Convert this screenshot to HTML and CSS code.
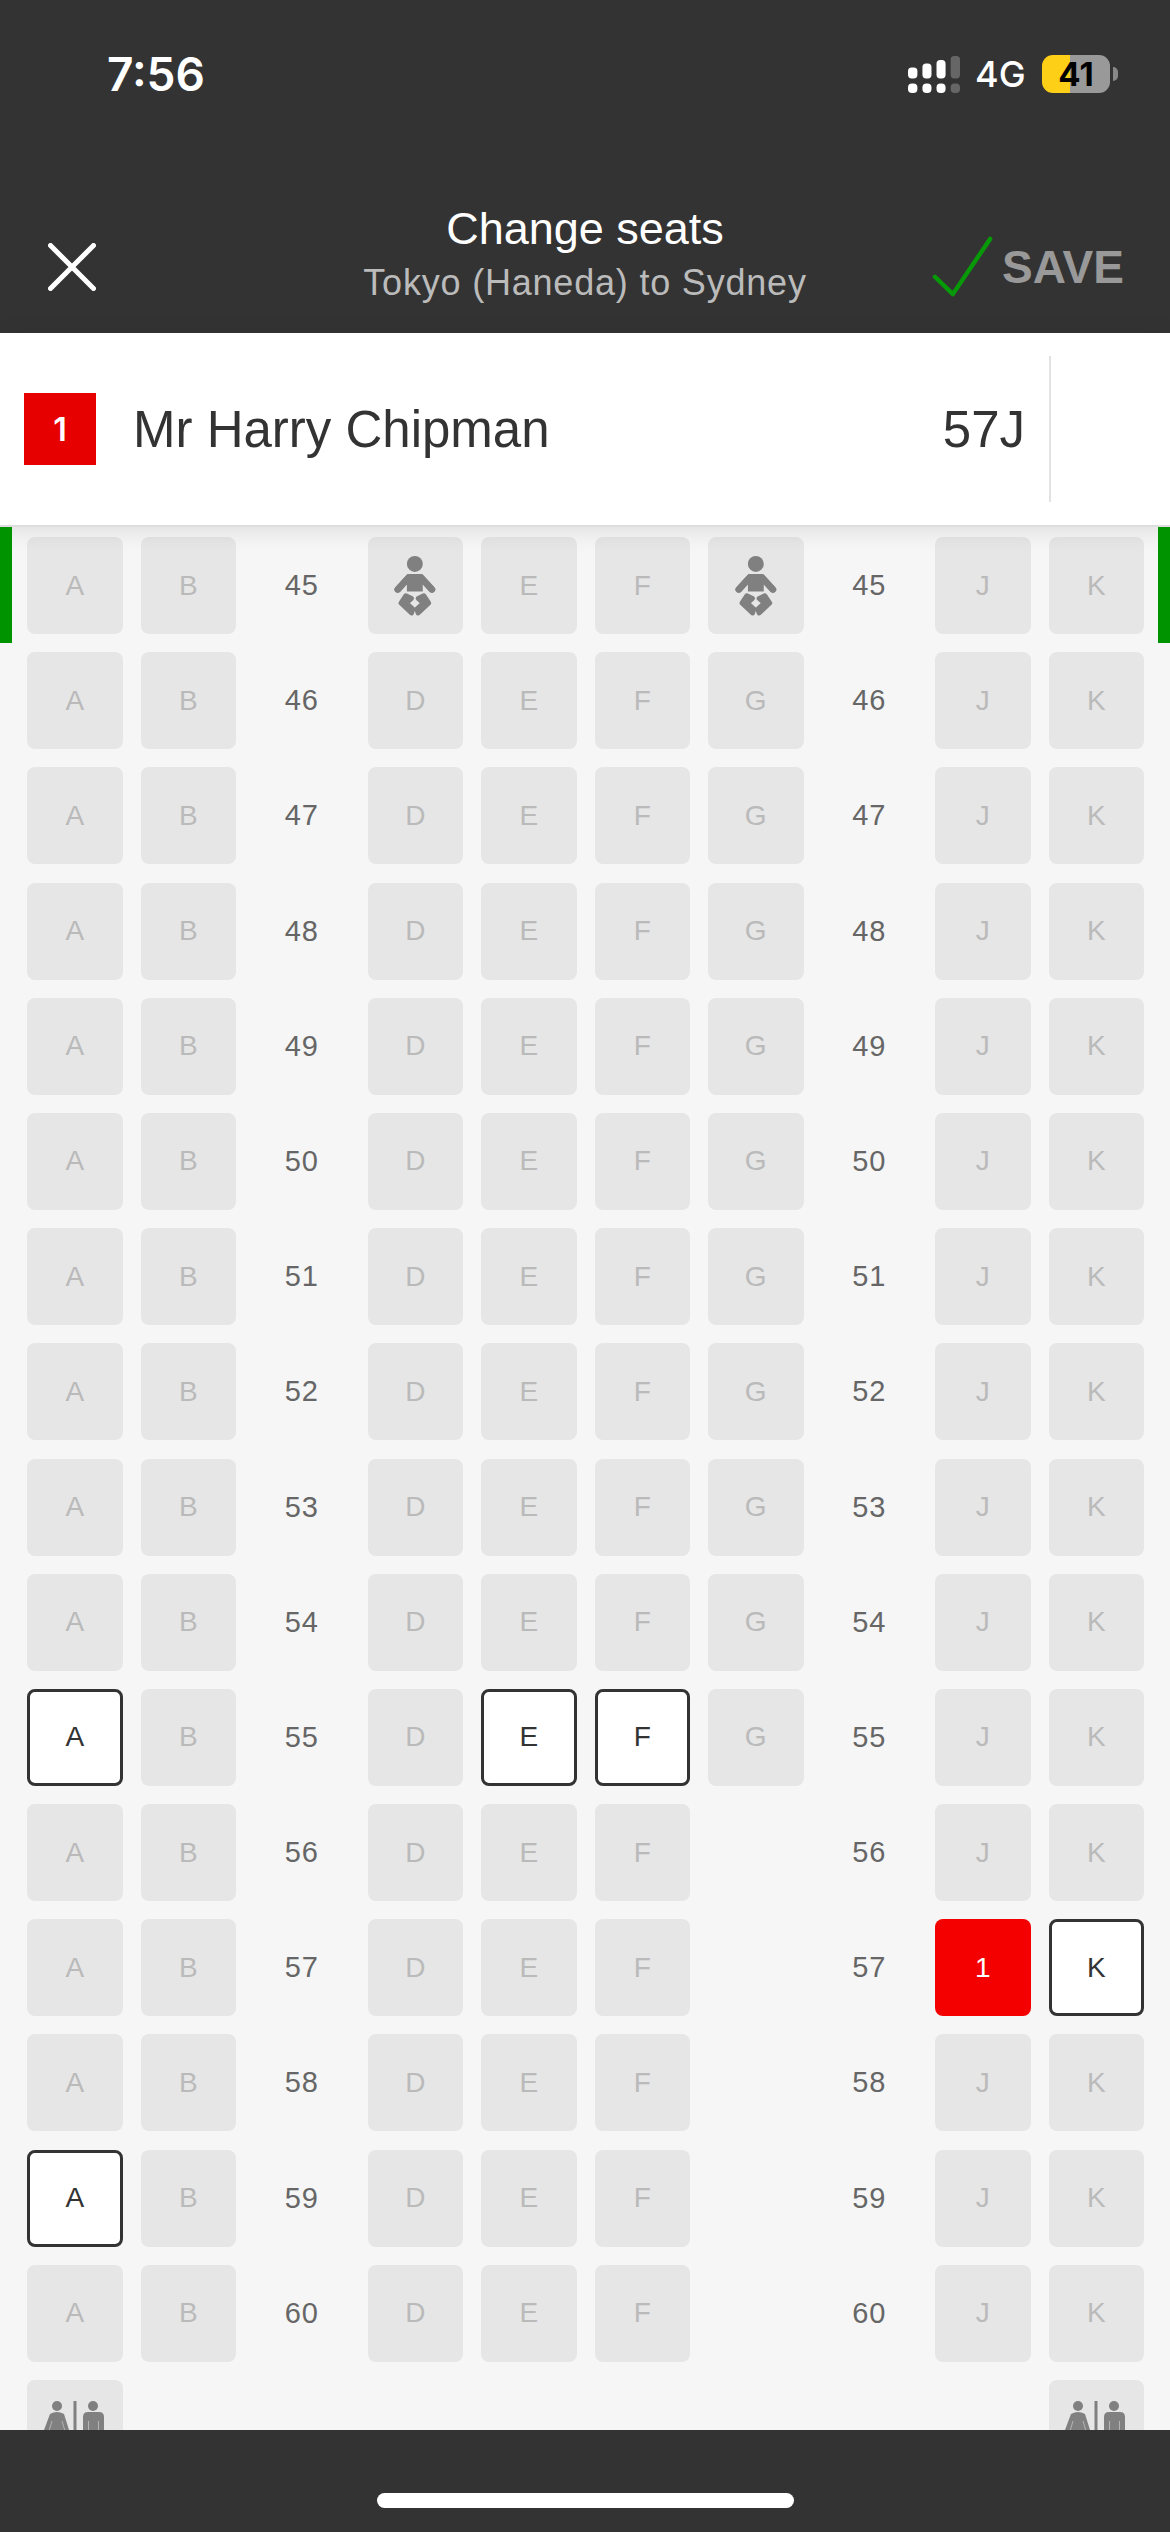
FILE: index.html
```html
<!DOCTYPE html>
<html lang="en">
<head>
<meta charset="utf-8">
<title>Change seats</title>
<link rel="stylesheet" href="styles.css">
</head>
<body>
<div class="app">
  <header class="top">
    <div class="status">
      <span class="time">7:56</span>
      <div class="status-right">
        <svg class="signal" viewBox="0 0 155 110" aria-hidden="true">
          <rect x="0" y="34" width="28" height="33" rx="11" fill="#fff"/>
          <rect x="43" y="22" width="27" height="45" rx="11" fill="#fff"/>
          <rect x="85" y="12" width="27" height="55" rx="11" fill="#fff"/>
          <rect x="127" y="0" width="28" height="67" rx="11" fill="#666"/>
          <rect x="0" y="82" width="28" height="28" rx="12" fill="#fff"/>
          <rect x="43" y="82" width="27" height="28" rx="12" fill="#fff"/>
          <rect x="85" y="82" width="27" height="28" rx="12" fill="#fff"/>
          <rect x="127" y="82" width="28" height="28" rx="12" fill="#666"/>
        </svg>
        <span class="net">4G</span>
        <div class="battery"><span class="battery-level">41</span></div>
        <span class="battery-nub"></span>
      </div>
    </div>
    <div class="nav">
      <svg class="close" viewBox="0 0 48 48" aria-hidden="true"><path d="M2.5 2.5 45.500 45.500M45.500 2.500 2.500 45.500"/></svg>
      <div class="titles">
        <div class="title">Change seats</div>
        <div class="subtitle">Tokyo (Haneda) to Sydney</div>
      </div>
      <div class="save">
        <svg class="tick" viewBox="0 0 64 64" aria-hidden="true"><path d="M3 42 21.500 60 60 3"/></svg>
        <span>SAVE</span>
      </div>
    </div>
  </header>

  <section class="passenger">
    <span class="badge">1</span>
    <span class="name">Mr Harry Chipman</span>
    <span class="seat-no">57J</span>
    <span class="divider"></span>
  </section>

  <main class="map">
    <span class="marker marker-left"></span>
    <span class="marker marker-right"></span>
    <div class="grid">
      <div class="seat">A</div><div class="seat">B</div><div class="row-no">45</div>
      <div class="seat"><svg class="baby" viewBox="0 0 145 190" aria-hidden="true"><circle cx="72" cy="30" r="24"/><path d="M50 60H94L130 100 118 116 96 92V113H48V92L26 116 14 100Z"/><path class="limb" d="M52 72 20 107M92 72 124 107"/><path class="leg" d="M45 126 30 148 62 178 66 166 46 148 62 134Z"/><path class="leg" d="M99 126 114 148 82 178 78 166 98 148 82 134Z"/></svg></div>
      <div class="seat">E</div><div class="seat">F</div>
      <div class="seat"><svg class="baby" viewBox="0 0 145 190" aria-hidden="true"><circle cx="72" cy="30" r="24"/><path d="M50 60H94L130 100 118 116 96 92V113H48V92L26 116 14 100Z"/><path class="limb" d="M52 72 20 107M92 72 124 107"/><path class="leg" d="M45 126 30 148 62 178 66 166 46 148 62 134Z"/><path class="leg" d="M99 126 114 148 82 178 78 166 98 148 82 134Z"/></svg></div>
      <div class="row-no">45</div><div class="seat">J</div><div class="seat">K</div>

      <div class="seat">A</div><div class="seat">B</div><div class="row-no">46</div><div class="seat">D</div><div class="seat">E</div><div class="seat">F</div><div class="seat">G</div><div class="row-no">46</div><div class="seat">J</div><div class="seat">K</div>
      <div class="seat">A</div><div class="seat">B</div><div class="row-no">47</div><div class="seat">D</div><div class="seat">E</div><div class="seat">F</div><div class="seat">G</div><div class="row-no">47</div><div class="seat">J</div><div class="seat">K</div>
      <div class="seat">A</div><div class="seat">B</div><div class="row-no">48</div><div class="seat">D</div><div class="seat">E</div><div class="seat">F</div><div class="seat">G</div><div class="row-no">48</div><div class="seat">J</div><div class="seat">K</div>
      <div class="seat">A</div><div class="seat">B</div><div class="row-no">49</div><div class="seat">D</div><div class="seat">E</div><div class="seat">F</div><div class="seat">G</div><div class="row-no">49</div><div class="seat">J</div><div class="seat">K</div>
      <div class="seat">A</div><div class="seat">B</div><div class="row-no">50</div><div class="seat">D</div><div class="seat">E</div><div class="seat">F</div><div class="seat">G</div><div class="row-no">50</div><div class="seat">J</div><div class="seat">K</div>
      <div class="seat">A</div><div class="seat">B</div><div class="row-no">51</div><div class="seat">D</div><div class="seat">E</div><div class="seat">F</div><div class="seat">G</div><div class="row-no">51</div><div class="seat">J</div><div class="seat">K</div>
      <div class="seat">A</div><div class="seat">B</div><div class="row-no">52</div><div class="seat">D</div><div class="seat">E</div><div class="seat">F</div><div class="seat">G</div><div class="row-no">52</div><div class="seat">J</div><div class="seat">K</div>
      <div class="seat">A</div><div class="seat">B</div><div class="row-no">53</div><div class="seat">D</div><div class="seat">E</div><div class="seat">F</div><div class="seat">G</div><div class="row-no">53</div><div class="seat">J</div><div class="seat">K</div>
      <div class="seat">A</div><div class="seat">B</div><div class="row-no">54</div><div class="seat">D</div><div class="seat">E</div><div class="seat">F</div><div class="seat">G</div><div class="row-no">54</div><div class="seat">J</div><div class="seat">K</div>
      <div class="seat open">A</div><div class="seat">B</div><div class="row-no">55</div><div class="seat">D</div><div class="seat open">E</div><div class="seat open">F</div><div class="seat">G</div><div class="row-no">55</div><div class="seat">J</div><div class="seat">K</div>
      <div class="seat">A</div><div class="seat">B</div><div class="row-no">56</div><div class="seat">D</div><div class="seat">E</div><div class="seat">F</div><div class="gap"></div><div class="row-no">56</div><div class="seat">J</div><div class="seat">K</div>
      <div class="seat">A</div><div class="seat">B</div><div class="row-no">57</div><div class="seat">D</div><div class="seat">E</div><div class="seat">F</div><div class="gap"></div><div class="row-no">57</div><div class="seat taken">1</div><div class="seat open">K</div>
      <div class="seat">A</div><div class="seat">B</div><div class="row-no">58</div><div class="seat">D</div><div class="seat">E</div><div class="seat">F</div><div class="gap"></div><div class="row-no">58</div><div class="seat">J</div><div class="seat">K</div>
      <div class="seat open">A</div><div class="seat">B</div><div class="row-no">59</div><div class="seat">D</div><div class="seat">E</div><div class="seat">F</div><div class="gap"></div><div class="row-no">59</div><div class="seat">J</div><div class="seat">K</div>
      <div class="seat">A</div><div class="seat">B</div><div class="row-no">60</div><div class="seat">D</div><div class="seat">E</div><div class="seat">F</div><div class="gap"></div><div class="row-no">60</div><div class="seat">J</div><div class="seat">K</div>

      <div class="seat toilet"><svg class="wc" viewBox="0 0 62 70" aria-hidden="true"><circle cx="13" cy="5" r="5"/><path d="M6 13Q13 9 20 13L25 29V60H0V29Z"/><rect x="29.500" y="0" width="3" height="70"/><circle cx="49" cy="5" r="5"/><path d="M39 16Q39 11 44 11H55Q60 11 60 16V60H39Z"/><path class="wc-line" d="M8 20 5 30M18 20 21 30M44.500 20V30M54.500 20V30"/></svg></div>
      <div class="gap span8"></div>
      <div class="seat toilet"><svg class="wc" viewBox="0 0 62 70" aria-hidden="true"><circle cx="13" cy="5" r="5"/><path d="M6 13Q13 9 20 13L25 29V60H0V29Z"/><rect x="29.500" y="0" width="3" height="70"/><circle cx="49" cy="5" r="5"/><path d="M39 16Q39 11 44 11H55Q60 11 60 16V60H39Z"/><path class="wc-line" d="M8 20 5 30M18 20 21 30M44.500 20V30M54.500 20V30"/></svg></div>
    </div>
  </main>

  <footer class="bottom"><span class="home"></span></footer>
</div>
</body>
</html>
```

FILE: styles.css
```css
* { box-sizing: border-box; }
html, body { margin: 0; padding: 0; }
body { font-family: "Liberation Sans", Arial, sans-serif; background: #f6f6f6; }

.app { width: 1170px; height: 2532px; display: flex; flex-direction: column; overflow: hidden; }

/* header */
.top { height: 333px; flex: none; background: #333; color: #fff; display: flex; flex-direction: column; }
.status { height: 148px; flex: none; padding: 51px 52px 0 107px; display: flex; justify-content: space-between; align-items: flex-start; font-family: Inter, sans-serif; }
.time { font-size: 46px; font-weight: 600; line-height: 46px; }
.status-right { display: flex; align-items: center; height: 46px; }
.signal { width: 52px; height: 37px; margin-right: 15px; }
.net { font-size: 36px; font-weight: 500; line-height: 40px; width: 67px; }
.battery { width: 68px; height: 38px; border-radius: 11px; overflow: hidden; background: linear-gradient(90deg, #fdd017 0 28px, #999 28px); display: flex; align-items: center; justify-content: center; }
.battery-level { color: #000; font-size: 33px; font-weight: 700; line-height: 38px; }
.battery-nub { width: 5px; height: 14px; margin-left: 3px; background: #888; border-radius: 0 6px 6px 0; }

.nav { flex: 1; position: relative; display: flex; justify-content: center; align-items: flex-start; }
.close { position: absolute; left: 48px; top: 95px; width: 48px; height: 48px; fill: none; stroke: #fff; stroke-width: 5; stroke-linecap: round; }
.titles { text-align: center; padding-top: 52px; }
.title { font-size: 45px; line-height: 58px; }
.subtitle { font-size: 36px; line-height: 50px; color: #bbb; letter-spacing: 0.8px; }
.save { position: absolute; left: 932px; top: 88px; display: flex; align-items: center; color: #999; font-weight: 700; font-size: 46px; }
.tick { width: 62px; height: 62px; margin-right: 8px; fill: none; stroke: #089908; stroke-width: 4.500; stroke-linecap: round; stroke-linejoin: round; }

/* passenger */
.passenger { height: 194px; flex: none; background: #fff; border-bottom: 2px solid #ddd; box-shadow: 0 4px 22px rgba(0, 0, 0, .1); position: relative; z-index: 2; display: flex; align-items: center; padding: 0 0 0 24px; color: #333; }
.badge { width: 72px; height: 72px; background: #e60000; color: #fff; display: flex; align-items: center; justify-content: center; font-family: Inter, sans-serif; font-size: 32px; font-weight: 600; margin-right: 37px; }
.name { font-size: 51px; flex: 1; }
.seat-no { font-size: 51px; margin-right: 24px; }
.divider { width: 2px; height: 146px; background: #e2e2e2; margin-right: 119px; }

/* seat map */
.map { flex: 1; min-height: 0; overflow: hidden; position: relative; background: #f6f6f6; padding: 10px 26px 0 27px; }
.marker { position: absolute; top: 0; width: 12px; height: 116px; background: #009300; z-index: 3; }
.marker-left { left: 0; }
.marker-right { right: 0; }
.grid { display: grid; grid-template-columns: repeat(10, 1fr); grid-auto-rows: 97px; column-gap: 18px; row-gap: 18.200px; }
.seat { background: #e6e6e6; border-radius: 8px; color: #bababa; font-size: 28px; display: flex; align-items: center; justify-content: center; }
.row-no { color: #666; font-size: 29px; letter-spacing: .8px; display: flex; align-items: center; justify-content: center; }
.open { background: #fff; border: 3.500px solid #333; color: #333; }
.taken { background: #f40000; color: #fff; }
.span8 { grid-column: span 8; }

.baby { width: 48px; height: 63px; fill: #808080; }
.limb { fill: none; stroke: #808080; stroke-width: 20; stroke-linecap: round; }
.leg { stroke: #808080; stroke-width: 15; stroke-linejoin: round; }
.toilet { align-items: flex-start; padding-top: 21px; }
.wc { width: 62px; height: 70px; fill: #808080; flex: none; }
.wc-line { fill: none; stroke: #b4b4b4; stroke-width: 1; }

/* footer */
.bottom { height: 102px; flex: none; background: #333; display: flex; justify-content: center; padding-top: 63px; position: relative; z-index: 2; }
.home { width: 417px; height: 15px; background: #fff; border-radius: 8px; }
```
